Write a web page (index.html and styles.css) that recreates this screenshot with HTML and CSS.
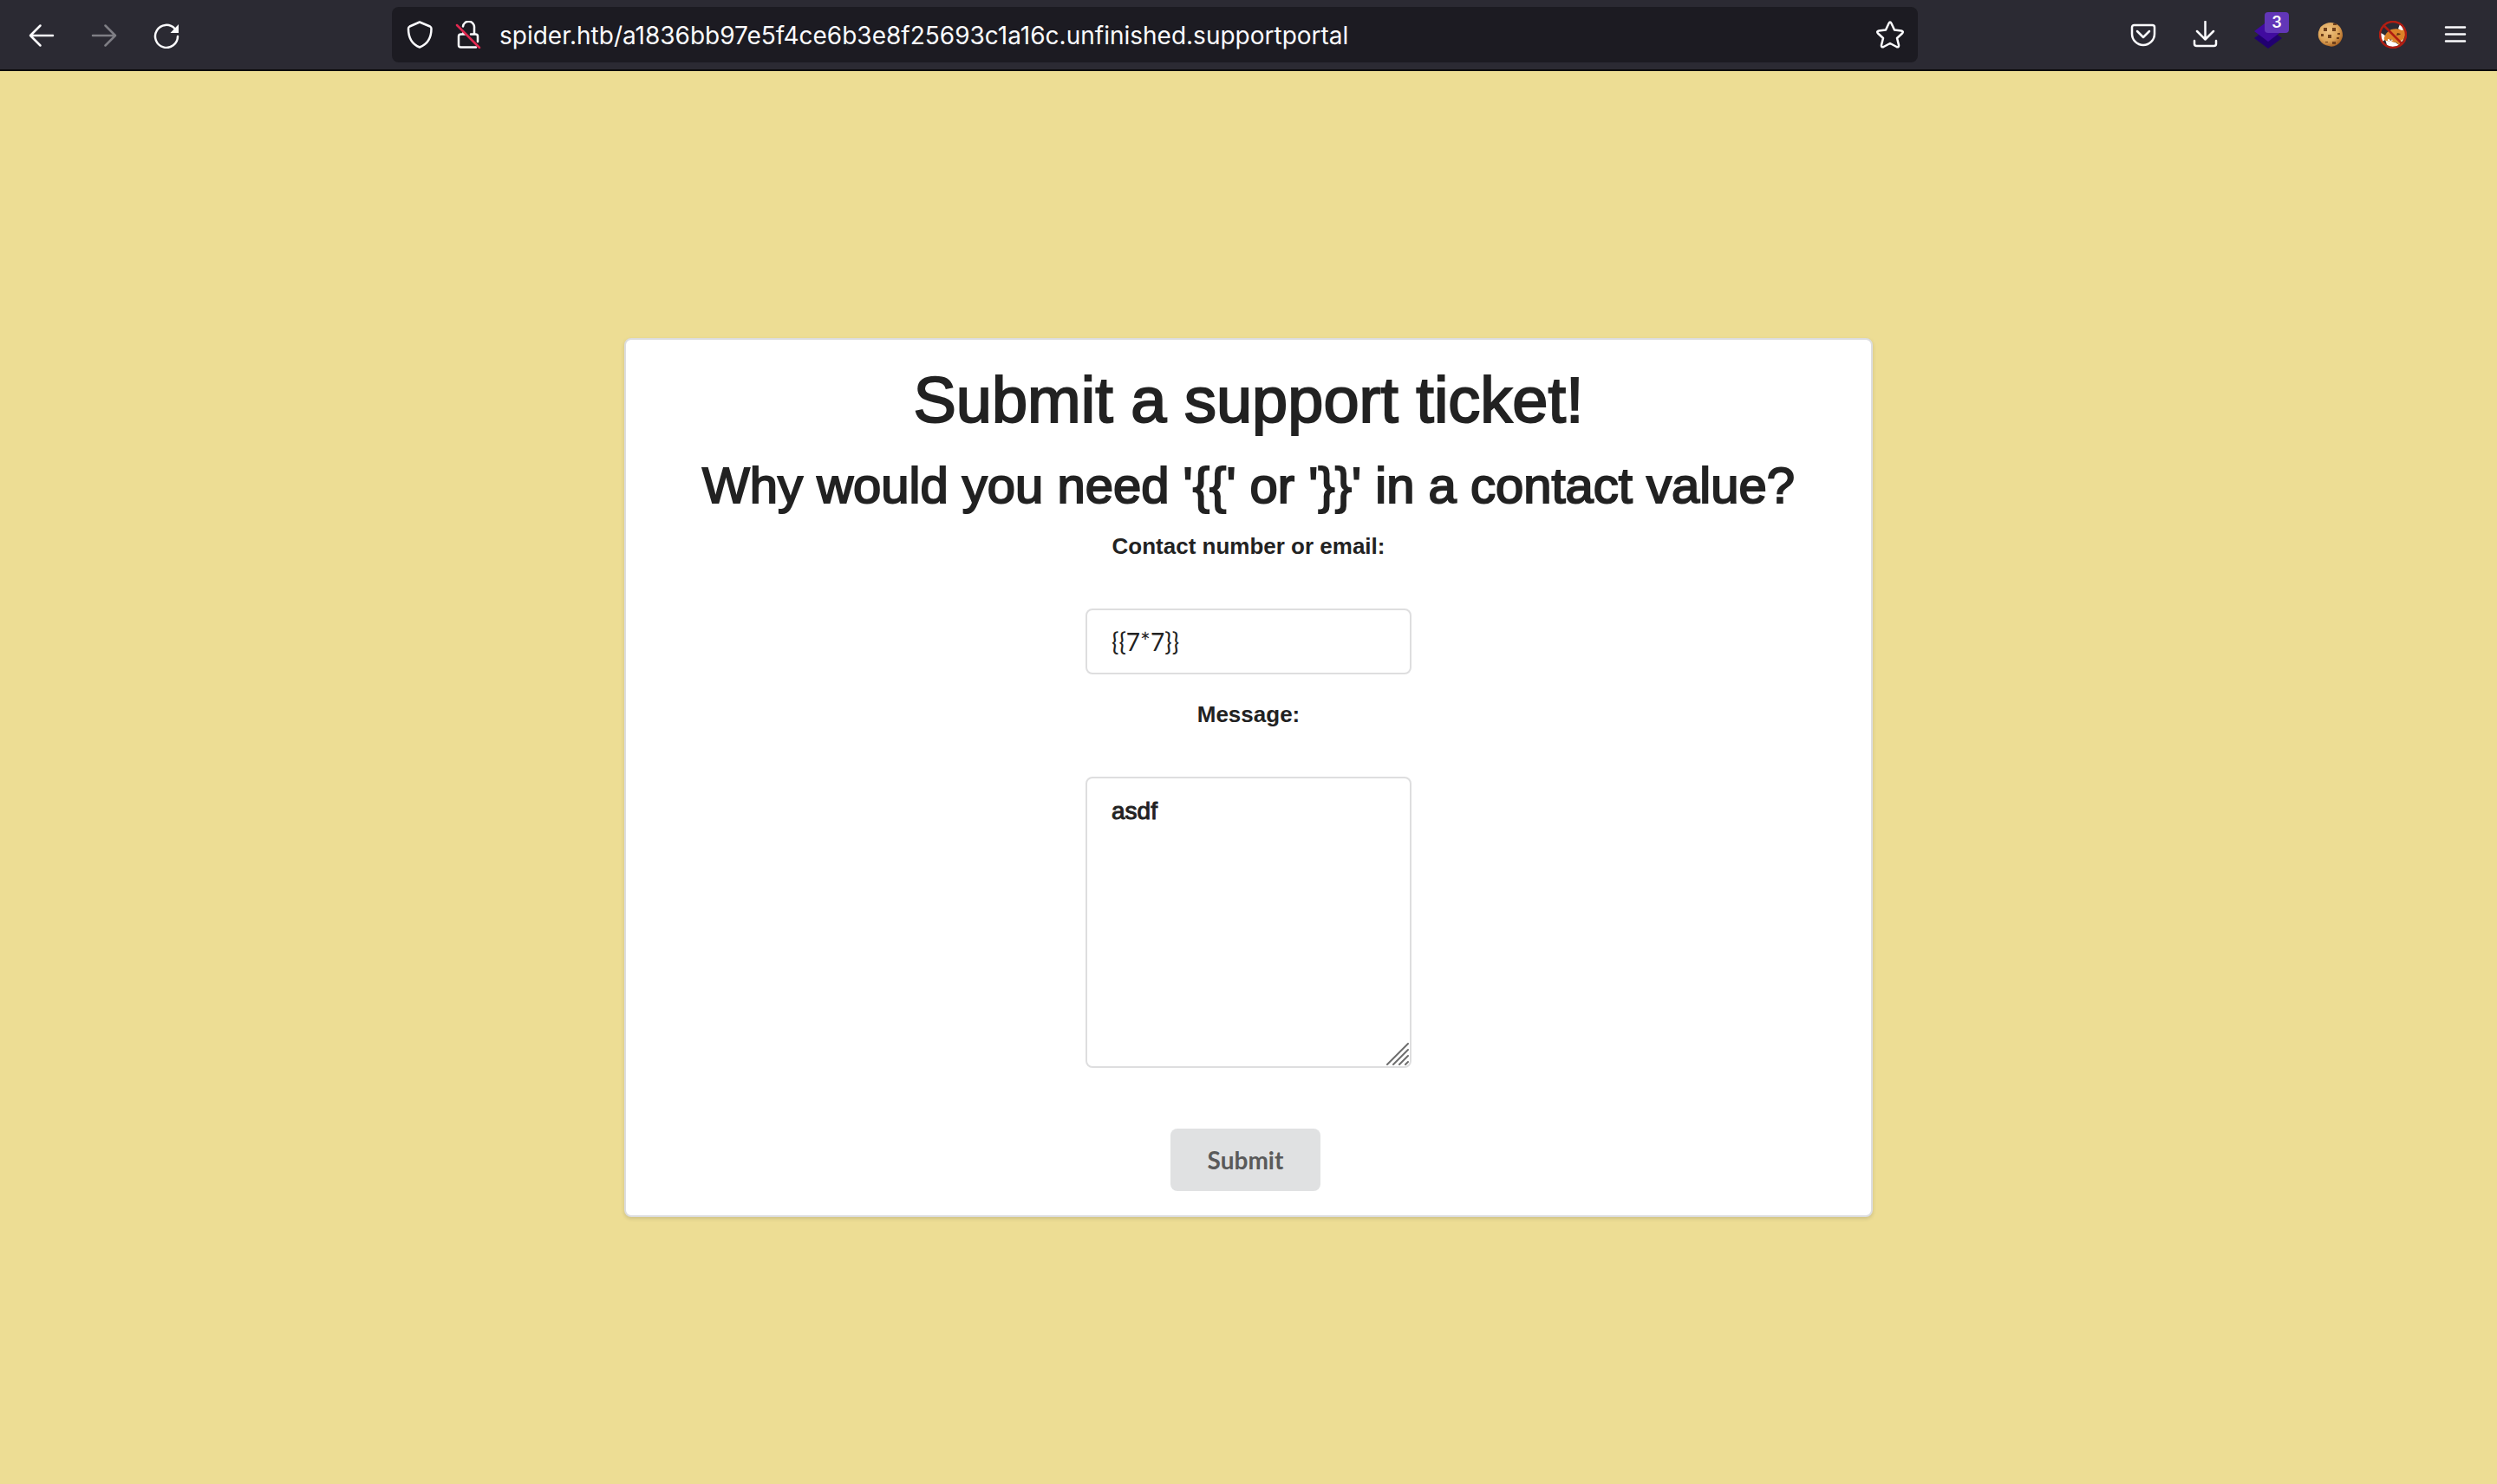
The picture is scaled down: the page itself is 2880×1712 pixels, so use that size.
FILE: index.html
```html
<!DOCTYPE html>
<html lang="en">
<head>
<meta charset="utf-8">
<title>Support portal</title>
<link rel="stylesheet" href="styles.css">
</head>
<body>
<header class="toolbar">
  <nav class="history" aria-label="History">
    <button class="tool" type="button" aria-label="Back">
      <svg class="icon" viewBox="0 0 32 32"><path d="M29 17H3M14.500 5.500 3 17l11.500 11.500"/></svg>
    </button>
    <button class="tool" type="button" aria-label="Forward" disabled>
      <svg class="icon" viewBox="0 0 32 32"><path d="M3 17h26M17.500 5.500 29 17 17.500 28.500"/></svg>
    </button>
    <button class="tool" type="button" aria-label="Reload">
      <svg class="icon" viewBox="0 0 32 32"><path d="M29 18A13 13 0 1 1 25.500 9"/><path class="solid" d="M30 4v10H20.500z"/></svg>
    </button>
  </nav>
  <div class="address">
    <div class="identity">
      <svg class="icon" viewBox="0 0 32 32"><path d="M16 1.500 28 6.500q1.500.8 1.500 2.500C29.500 19 25 27 16 30.500 7 27 3 19 3 9q0-1.700 1.500-2.500z"/></svg>
      <svg class="icon" viewBox="0 0 32 32"><path d="M10 6.500a6.500 6.500 0 0 1 13 1.500v7.500M10.500 13v2.500M7.500 15.500A2.500 2.500 0 0 0 5 18v10a2.500 2.500 0 0 0 2.500 2.500H25M19 15.500h5.500A2.500 2.500 0 0 1 27 18v6M7.500 15.500H12"/><path class="slash" d="m3 5 26 26"/></svg>
    </div>
    <input class="url" type="text" aria-label="Address" value="spider.htb/a1836bb97e5f4ce6b3e8f25693c1a16c.unfinished.supportportal">
    <button class="star" type="button" aria-label="Bookmark this page">
      <svg class="icon" viewBox="0 0 32 32"><path d="M14.500 3q1.500-3 3 0l3.500 7.500 8 1q3 .6 1 3L24 20l2 8q.3 3-2.500 2L16 26l-7.500 4Q5.700 31 6 28l2-8-6-5.500q-2-2.400 1-3l8-1z"/></svg>
    </button>
  </div>
  <div class="extensions">
    <button class="tool" type="button" aria-label="Save to Pocket">
      <svg class="icon" viewBox="0 0 32 32"><path d="M5.500 5h21A2.500 2.500 0 0 1 29 7.500V15a13 13 0 0 1-26 0V7.500A2.500 2.500 0 0 1 5.500 5zM9 12l7 7 7-7"/></svg>
    </button>
    <button class="tool" type="button" aria-label="Downloads">
      <svg class="icon" viewBox="0 0 32 32"><path d="M15.500 1v20M6 12l9.500 9.500L25 12M3 23v3.500A2.500 2.500 0 0 0 5.500 29h20a2.500 2.500 0 0 0 2.500-2.500V23"/></svg>
    </button>
    <button class="tool" type="button" aria-label="Containers">
      <svg class="icon" viewBox="0 0 32 32"><path fill="#210070" stroke="none" d="M16 8 32 20 16 32 0 20z"/><path fill="#400b9f" stroke="none" d="M16 0 32 12 16 24 0 12z"/></svg>
      <span class="badge">3</span>
    </button>
    <button class="tool" type="button" aria-label="Cookies">
      <svg class="icon" viewBox="0 0 32 32" stroke-width="0">
        <defs><radialGradient id="dough" cx="40%" cy="35%" r="70%"><stop offset="0" stop-color="#f0c586"/><stop offset=".6" stop-color="#dda458"/><stop offset="1" stop-color="#a9601f"/></radialGradient></defs>
        <g stroke="none">
          <path fill="url(#dough)" d="M11 3q5-2 10 0 6 2 8 8 2 6 0 10-2 5-6 7-5 3-9 1-7-1-10-6-3-4-2-10 2-8 9-10z"/>
          <path fill="#70401b" d="M8 8h4v4H8zM18 8h4v4h-4zM13 16h4v4h-4zM5 15h3v3H5zM24 14h3v2h-3zM23 19h3v2h-3zM18 24h4v3h-4zM19 3h4v2h-4zM10 24h3v1h-3z"/>
        </g>
      </svg>
    </button>
    <button class="tool" type="button" aria-label="Proxy off">
      <svg class="icon" viewBox="0 0 32 32">
        <g stroke="none">
          <path fill="#fff" d="M22 9 24 4q5 4 4 11zM2 14q5 2 7 6l-5 4Q2 20 2 14zM7 21l12 4 4 3q-8 4-14 0z"/>
          <path fill="#db8228" d="M6 19q2-6 8-9 8-2 12 1l4-1q1 7-2 12l-5 6-3-3-12-2q-3-1-2-4z"/>
          <path fill="#fff" d="m10 21 6 1-2 2-4-1zM28 21l-3 5-1-2z"/>
          <path fill="#5c3112" d="m21 14 4 1-1 1-4 1zM12 21l3 1-2 1z"/>
        </g>
        <path stroke="#b11d12" d="M5.500 5.500l21 21M31 16a15 15 0 1 1-30 0 15 15 0 0 1 30 0z"/>
      </svg>
    </button>
    <button class="tool" type="button" aria-label="Menu">
      <svg class="icon" viewBox="0 0 32 32"><path d="M5 7.500h22M5 15.500h22M5 23.500h22"/></svg>
    </button>
  </div>
</header>
<main class="page">
  <form class="card">
    <h1 class="title">Submit a support ticket!</h1>
    <h2 class="subtitle">Why would you need '{{' or '}}' in a contact value?</h2>
    <label class="label" for="contact">Contact number or email:</label>
    <input class="field" id="contact" type="text" value="{{7*7}}">
    <label class="label" for="message">Message:</label>
    <div class="resizable">
      <textarea class="field message" id="message">asdf</textarea>
      <svg class="grip" viewBox="0 0 26 26" aria-hidden="true"><path d="M1 25 25 1M8 25 25 8M15 25l10-10M22 25l3-3"/></svg>
    </div>
    <button class="submit" type="submit">Submit</button>
  </form>
</main>
</body>
</html>
```
FILE: styles.css
```css
* { box-sizing: border-box; }
body { margin: 0; min-height: 100vh; display: flex; flex-direction: column; background: #eddd94; color: #222; font-family: "Liberation Sans", Arial, sans-serif; }
button { font: inherit; border: 0; padding: 0; background: none; color: inherit; }

/* Browser toolbar */
.toolbar { display: grid; grid-template-columns: 452px 1fr 668px; align-items: center; height: 82px; background: #2b2a33; border-bottom: 2px solid #0c0c0d; color: #fbfbfe; }
.history { display: flex; padding-left: 12px; }
.tool { position: relative; width: 72px; height: 72px; display: grid; place-items: center; }
.tool:disabled { opacity: .4; }
.icon { width: 32px; height: 32px; flex: none; fill: none; stroke: currentColor; stroke-width: 2.500; stroke-linecap: round; stroke-linejoin: round; display: block; }
.solid { fill: currentColor; stroke: none; }
.slash { stroke: #e22850; }
.address { display: flex; align-items: center; height: 64px; gap: 20px; padding: 0 16px; background: #1c1b22; border-radius: 8px; }
.identity { display: flex; gap: 24px; }
.url { flex: 1; min-width: 0; height: 36px; border: 0; padding: 2px 0 0; background: none; color: #fbfbfe; font: 28px/34px Inter, sans-serif; }
.extensions { display: flex; justify-content: flex-end; padding-right: 12px; }
.badge { position: absolute; top: 10px; right: 12px; width: 28px; height: 24px; border-radius: 4px; background: #6236b8; font: 600 18px/24px Inter, sans-serif; color: #fff; }

/* Ticket form */
.page { flex: 1; display: grid; place-items: center; }
.card { width: 50%; display: flex; flex-direction: column; align-items: center; padding: 26px 28px 28px; background: #fff; border: 2px solid #dcdddf; border-radius: 8px; box-shadow: 0 2px 4px rgba(34,36,38,.15); }
.title, .subtitle { margin: 0; font-weight: 400; -webkit-text-stroke: 2px #222; }
.title { font-size: 74px; line-height: 88px; }
.subtitle { font-size: 58px; line-height: 72px; margin: 18px 0 16px; }
.label { font-size: 26px; font-weight: 700; line-height: 36px; }
.field { display: block; width: 376px; height: 76px; margin: 54px 0 28px; padding: 18px 28px; border: 2px solid #dededf; border-radius: 8px; background: #fff; color: #222; font: 28px/34px Lato, sans-serif; }
.resizable { position: relative; margin: 54px 0 70px; }
.message { height: 336px; margin: 0; font: 28px/40px "Liberation Sans", Arial, sans-serif; -webkit-text-stroke: 1px #222; resize: both; }
.message::-webkit-resizer { display: none; }
.grip { position: absolute; right: 3px; bottom: 3px; width: 26px; height: 26px; fill: none; stroke: #6e6e6e; stroke-width: 2; stroke-linecap: round; pointer-events: none; }
.submit { width: 173px; height: 72px; margin-right: 7px; border-radius: 8px; background: #e0e1e2; color: #5a5a5a; font: 700 28px/28px Lato, sans-serif; }
```
